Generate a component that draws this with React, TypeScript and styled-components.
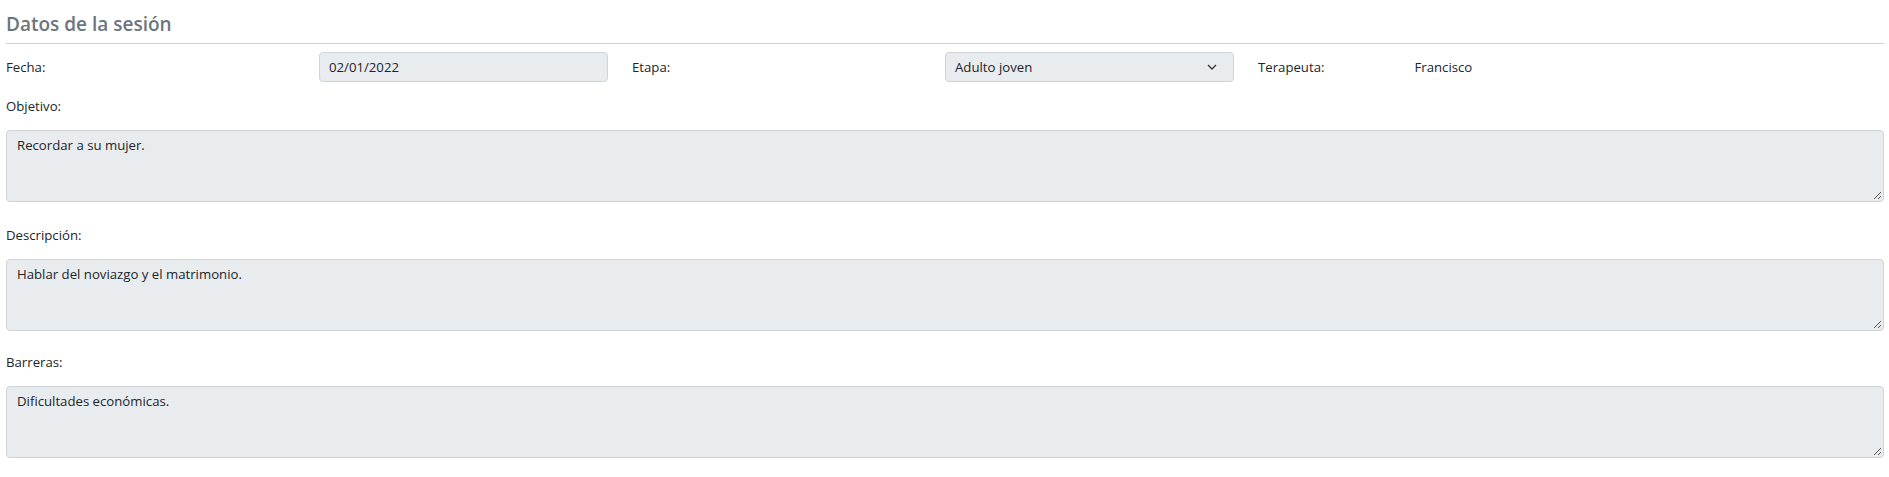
import React from "react";
import styled, { createGlobalStyle } from "styled-components";

const Global = createGlobalStyle`
  html, body { margin: 0; padding: 0; background: #fff; }
  body { font-family: "Open Sans", "Noto Sans", sans-serif; color: #212529; }
  * { box-sizing: border-box; }
`;

const Page = styled.div`
  padding: 0 5px 0 6px;
`;

const Title = styled.h2`
  margin: 0;
  padding-top: 10px;
  height: 44px;
  font-size: 19px;
  font-weight: 600;
  line-height: 28px;
  color: #6c757d;
  border-bottom: 1px solid #cfd1d3;
`;

const InfoRow = styled.div`
  display: grid;
  grid-template-columns: repeat(12, 1fr);
  align-items: center;
  margin-top: 8px;
  height: 30px;
`;

const Cell = styled.div<{ $span: number }>`
  grid-column: span ${(p) => p.$span};
  font-size: 13.2px;
  line-height: 20px;
`;

const Field = styled.div`
  width: calc(100% - 24px);
  height: 30px;
  display: flex;
  align-items: center;
  justify-content: space-between;
  padding: 0 16px 0 9px;
  background: #e9ecef;
  border: 1px solid #ced4da;
  border-radius: 4px;
  font-size: 13.2px;
  color: #212529;
`;

const Section = styled.div<{ $top: number }>`
  margin-top: ${(p) => p.$top}px;
`;

const Label = styled.div`
  font-size: 13.2px;
  line-height: 21px;
  margin-bottom: 13px;
`;

const Area = styled.div`
  position: relative;
  height: 72px;
  padding: 4px 10px;
  background: #e9ecef;
  border: 1px solid #ced4da;
  border-radius: 4px;
  font-size: 13.2px;
  line-height: 21px;
`;

const Grip = styled.svg`
  position: absolute;
  right: 1px;
  bottom: 1px;
`;

const Chevron = () => (
  <svg width="10" height="6" viewBox="0 0 10 6">
    <path d="M1 1l4 4 4-4" fill="none" stroke="#343a40" strokeWidth="1.4" />
  </svg>
);

const TextBox = ({ text }: { text: string }) => (
  <Area>
    {text}
    <Grip width="9" height="9" viewBox="0 0 9 9">
      <path d="M8 1L1 8M8 5L5 8" stroke="#555" strokeWidth="1" />
    </Grip>
  </Area>
);

export default function App() {
  return (
    <Page>
      <Global />
      <Title>Datos de la sesión</Title>
      <InfoRow>
        <Cell $span={2}>Fecha:</Cell>
        <Cell $span={2}>
          <Field>02/01/2022</Field>
        </Cell>
        <Cell $span={2}>Etapa:</Cell>
        <Cell $span={2}>
          <Field>
            Adulto joven
            <Chevron />
          </Field>
        </Cell>
        <Cell $span={1}>Terapeuta:</Cell>
        <Cell $span={1}>Francisco</Cell>
      </InfoRow>
      <Section $top={14}>
        <Label>Objetivo:</Label>
        <TextBox text="Recordar a su mujer." />
      </Section>
      <Section $top={23}>
        <Label>Descripción:</Label>
        <TextBox text="Hablar del noviazgo y el matrimonio." />
      </Section>
      <Section $top={21}>
        <Label>Barreras:</Label>
        <TextBox text="Dificultades económicas." />
      </Section>
    </Page>
  );
}
